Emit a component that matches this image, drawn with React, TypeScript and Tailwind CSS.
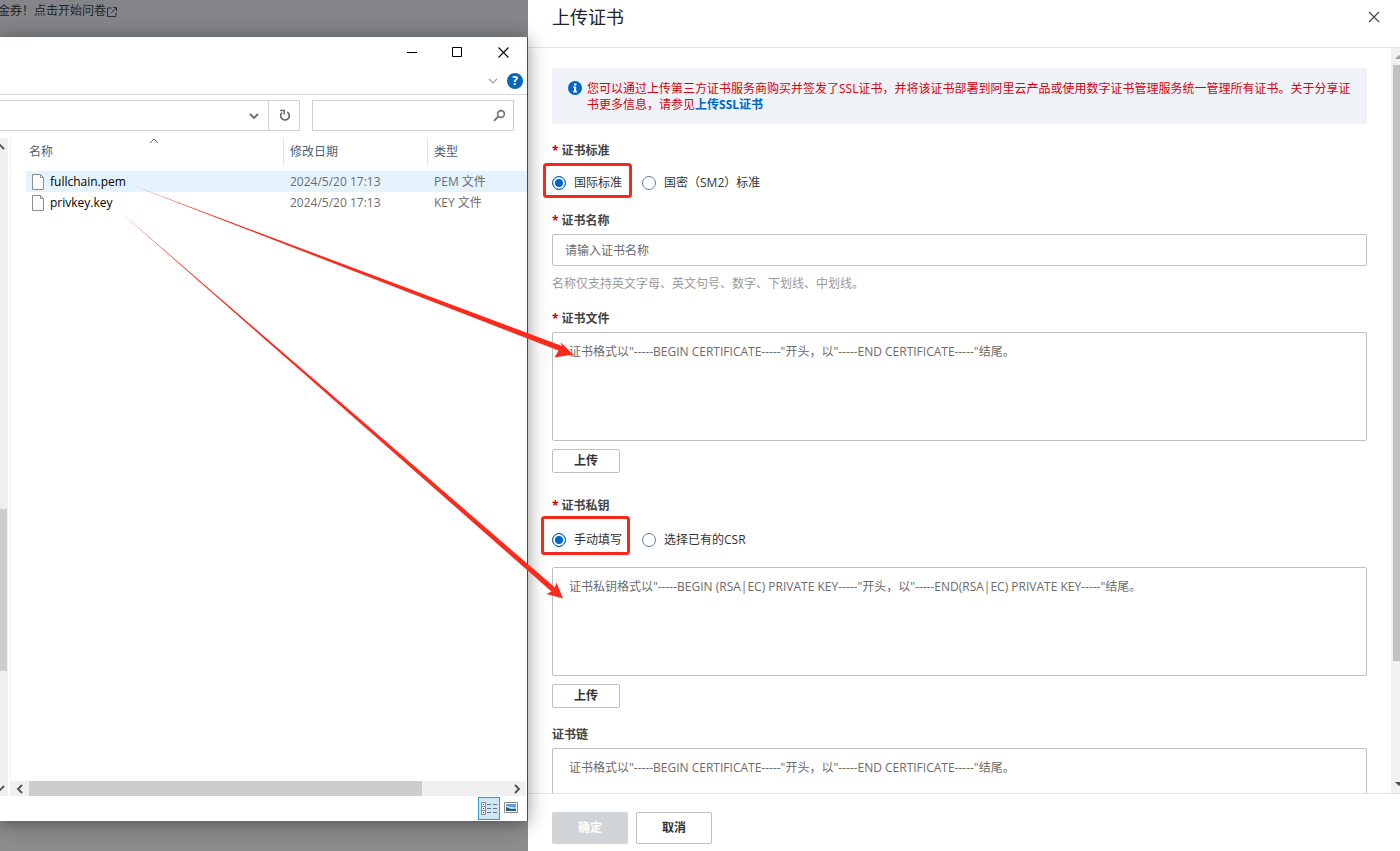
import { useState } from 'react'
import type { ReactNode } from 'react'

const files = [
  { name: 'fullchain.pem', date: '2024/5/20 17:13', type: 'PEM 文件' },
  { name: 'privkey.key', date: '2024/5/20 17:13', type: 'KEY 文件' },
]

const certPlaceholder = '证书格式以"-----BEGIN CERTIFICATE-----"开头，以"-----END CERTIFICATE-----"结尾。'
const keyPlaceholder = '证书私钥格式以"-----BEGIN (RSA|EC) PRIVATE KEY-----"开头，以"-----END(RSA|EC) PRIVATE KEY-----"结尾。'

function FileIcon() {
  return (
    <svg width="12" height="16" viewBox="0 0 12 16" className="shrink-0">
      <path d="M0.5 0.5h8l3 3v12h-11z" fill="#fafafa" stroke="#8f8f8f" />
      <path d="M8.5 0.5v3h3" fill="none" stroke="#8f8f8f" />
    </svg>
  )
}

function Chevron({ d, color = '#505050' }: { d: string; color?: string }) {
  return (
    <svg width="10" height="10" viewBox="0 0 10 10" className="shrink-0">
      <path d={d} fill="none" stroke={color} strokeWidth="1.8" />
    </svg>
  )
}

function Explorer() {
  const [selected, setSelected] = useState('fullchain.pem')

  return (
    <section className="relative z-10 mr-px flex min-h-0 flex-1 flex-col bg-white shadow-[0_2px_18px_rgba(0,0,0,0.45),1px_0_0_#5c5f63]">
      <div className="flex h-[30px] shrink-0 items-center justify-end pr-px">
        <button aria-label="最小化" className="flex h-full w-[46px] items-center justify-center">
          <svg width="11" height="11" viewBox="0 0 11 11"><path d="M1 5.5h10" stroke="#000" /></svg>
        </button>
        <button aria-label="最大化" className="flex h-full w-[46px] items-center justify-center">
          <svg width="11" height="11" viewBox="0 0 11 11"><path d="M0.5 0.5h9v9h-9z" fill="none" stroke="#000" /></svg>
        </button>
        <button aria-label="关闭" className="flex h-full w-[46px] items-center justify-center">
          <svg width="11" height="11" viewBox="0 0 11 11"><path d="M0.5 0.5l10 10M10.5 0.5l-10 10" stroke="#000" strokeWidth="1.1" /></svg>
        </button>
      </div>
      <div className="flex h-[28px] shrink-0 items-center justify-end gap-[9px] border-b border-[#d9d9d9] pr-1">
        <button aria-label="展开功能区" className="flex">
          <svg width="10" height="10" viewBox="0 0 10 10"><path d="M1 3l4 4l4-4" fill="none" stroke="#a0a0a0" strokeWidth="1.2" /></svg>
        </button>
        <button aria-label="帮助" className="flex size-4 items-center justify-center rounded-full bg-[#0a66b8] text-[12px] leading-4 font-bold text-white">?</button>
      </div>

      <div className="mt-[5px] mr-[13px] flex h-[31px] shrink-0 gap-3">
        <div className="flex w-[300px] border border-l-0 border-[#d0d0d0]">
          <button aria-label="以前的位置" className="flex flex-1 items-center justify-end pr-[9px]">
            <Chevron d="M1 3l4 4l4-4" color="#6a6a6a" />
          </button>
          <button aria-label="刷新" className="flex w-[31px] items-center justify-center border-l border-[#d0d0d0] pl-px">
            <svg width="12" height="13" viewBox="0 0 12 13">
              <path d="M8.2 3A4.3 4.3 0 1 1 3 3.6" fill="none" stroke="#6a6a6a" strokeWidth="1.7" />
              <path d="M1.2 1.6h4v4" fill="none" stroke="#6a6a6a" strokeWidth="1.5" />
            </svg>
          </button>
        </div>
        <div className="flex flex-1 items-center border border-[#d0d0d0] pr-[7px]">
          <input aria-label="搜索" className="h-full min-w-0 flex-1 px-2 text-[12px] outline-none" />
          <svg width="13" height="13" viewBox="0 0 13 13">
            <circle cx="8" cy="5" r="3.4" fill="none" stroke="#707070" strokeWidth="1.6" />
            <path d="M5.4 7.4L1 11.8" stroke="#707070" strokeWidth="1.8" />
          </svg>
        </div>
      </div>

      <div className="mt-[7px] flex min-h-0 flex-1">
        <div className="flex w-2 shrink-0 flex-col items-end overflow-hidden bg-[#f0f0f0] pr-[3px]">
          <div className="flex h-[17px] items-center"><Chevron d="M1 7l4-4l4 4" /></div>
          <div className="grow-[355]" />
          <div className="-mr-[2px] w-[7px] grow-[162] bg-[#cdcdcd]" />
          <div className="grow-[108]" />
          <div className="flex h-[17px] items-center"><Chevron d="M1 3l4 4l4-4" /></div>
        </div>
        <div className="ml-[2px] flex min-w-0 flex-1 flex-col border-l border-[#f0f0f0]">
          <div className="relative min-h-0 flex-1 pl-[15px]">
            <svg width="10" height="6" viewBox="0 0 10 6" className="absolute top-0 left-[138px]">
              <path d="M1 5l4-4l4 4" fill="none" stroke="#606060" />
            </svg>
            <table className="w-full table-fixed border-collapse text-left text-[12px] leading-[21px]">
              <colgroup>
                <col className="w-[258px]" />
                <col className="w-[144px]" />
                <col />
              </colgroup>
              <thead className="text-[#4c607a]">
                <tr>
                  <th className="p-0 pb-[6px] font-normal"><div className="h-[27px] border-r border-[#e5e5e5] pl-[3px] leading-[27px]">名称</div></th>
                  <th className="p-0 pb-[6px] font-normal"><div className="h-[27px] border-r border-[#e5e5e5] pl-[6px] leading-[27px]">修改日期</div></th>
                  <th className="p-0 pb-[6px] font-normal"><div className="h-[27px] pl-[6px] leading-[27px]">类型</div></th>
                </tr>
              </thead>
              <tbody>
                {files.map((file) => (
                  <tr
                    key={file.name}
                    onClick={() => setSelected(file.name)}
                    className={selected === file.name ? 'bg-[#e5f3ff]' : ''}
                  >
                    <td className="p-0 pl-[6px] text-black">
                      <div className="flex items-center gap-[6px]"><FileIcon />{file.name}</div>
                    </td>
                    <td className="p-0 pl-[6px] text-[#6d6d6d]">{file.date}</td>
                    <td className="p-0 pl-[6px] text-[#6d6d6d]">{file.type}</td>
                  </tr>
                ))}
              </tbody>
            </table>
          </div>
          <div className="mr-px flex h-[15px] shrink-0 items-stretch bg-[#f0f0f0]">
            <div className="flex w-[18px] items-center justify-center"><Chevron d="M7 1L3 5l4 4" /></div>
            <div className="grow-[394] bg-[#cdcdcd]" />
            <div className="grow-[86]" />
            <div className="flex w-[18px] items-center justify-center"><Chevron d="M3 1l4 4l-4 4" /></div>
          </div>
        </div>
      </div>

      <div className="flex h-[25px] shrink-0 items-start justify-end gap-1 pt-px pr-[9px]">
        <button aria-label="详细信息" className="flex h-[23px] w-[22px] items-center justify-center border border-[#2f9ccb] bg-[#cce8f6]">
          <svg width="17" height="14" viewBox="0 0 17 14">
            <path d="M0.5 0.5h4v4h-4zM0.5 4.5h4v4h-4zM0.5 8.5h4v4h-4z" fill="#fff" stroke="#8a8a8a" />
            <path d="M2 2h1v1h-1zM2 6h1v1h-1zM2 10h1v1h-1z" fill="#333" />
            <path d="M6 2.5h4M12 2.5h4M6 6.5h4M12 6.5h4M6 10.5h4M12 10.5h4" stroke="#6b7883" />
          </svg>
        </button>
        <button aria-label="大图标" className="flex h-[21px] items-center">
          <svg width="14" height="11" viewBox="0 0 14 11">
            <path d="M0.5 0.5h13v10h-13z" fill="#fff" stroke="#8a8a8a" />
            <path d="M2 2h10v7h-10z" fill="#5f9fe0" />
            <path d="M2 4l4 1l6 0.5v1l-10 0.5z" fill="#d9ecf7" />
            <path d="M2 5l5 2h5v2h-10z" fill="#2f5d6c" />
          </svg>
        </button>
      </div>
    </section>
  )
}

function Label({ htmlFor, required = true, children }: { htmlFor: string; required?: boolean; children: ReactNode }) {
  return (
    <label htmlFor={htmlFor} className="block h-4 font-bold text-[#444]">
      {required && <span className="mr-[3px] text-[#c80000]">*</span>}
      {children}
    </label>
  )
}

type RadioProps = {
  name: string
  value: string
  options: string[]
  onChange: (value: string) => void
}

function RadioGroup({ name, value, options, onChange }: RadioProps) {
  return (
    <div className="flex gap-5">
      {options.map((option, i) => (
        <label key={option} className="flex items-center gap-2">
          <input
            id={`${name}-${i}`}
            type="radio"
            name={name}
            checked={value === option}
            onChange={() => onChange(option)}
            className="size-[14px] appearance-none rounded-full border border-[#5b7fa6] bg-white checked:border-[#0064c8] checked:bg-[#0064c8] checked:shadow-[inset_0_0_0_2px_#fff]"
          />
          {option}
        </label>
      ))}
    </div>
  )
}

function CertTextarea({ id, placeholder }: { id: string; placeholder: string }) {
  return (
    <textarea
      id={id}
      placeholder={placeholder}
      className="block h-[109px] w-full resize-none rounded-[2px] border border-[#c0c0c0] bg-white px-4 py-[10px] leading-[18px] outline-none placeholder:text-[#6b6b6b]"
    />
  )
}

function UploadButton() {
  return (
    <button className="mt-2 block h-6 w-[68px] rounded-[2px] border border-[#c0c0c0] bg-white font-bold text-[#333]">上传</button>
  )
}

function Drawer() {
  const [standard, setStandard] = useState('国际标准')
  const [source, setSource] = useState('手动填写')

  return (
    <main className="flex min-w-0 flex-1 flex-col bg-white">
      <header className="flex h-12 shrink-0 items-start justify-between border-b border-[#e3e4e6] pt-[5px] pr-5 pl-6">
        <h1 className="text-[18px] leading-6 text-[#222]">上传证书</h1>
        <button aria-label="关闭" className="mt-[6px]">
          <svg width="12" height="12" viewBox="0 0 12 12"><path d="M1 1l10 10M11 1L1 11" stroke="#444" strokeWidth="1.1" /></svg>
        </button>
      </header>

      <div className="flex min-h-0 flex-1">
        <form className="min-w-0 flex-1 overflow-hidden px-6 pt-5">
          <div className="flex gap-[5px] bg-[#eff3f8] pt-[13px] pr-[15px] pb-[11px] pl-4">
            <svg width="14" height="14" viewBox="0 0 14 14" className="shrink-0">
              <circle cx="7" cy="7" r="7" fill="#0064c8" />
              <path d="M6 2.4h2.4v2H6zM5.2 5.6H8.2v4.6h1v1.2H5v-1.2h1V6.8h-.8z" fill="#fff" />
            </svg>
            <p className="text-[#d8000c]">
              您可以通过上传第三方证书服务商购买并签发了SSL证书，并将该证书部署到阿里云产品或使用数字证书管理服务统一管理所有证书。关于分享证书更多信息，请参见<a href="#upload-ssl" className="font-bold text-[#0064c8]">上传SSL证书</a>
            </p>
          </div>

          <div className="mt-[19px]">
            <Label htmlFor="standard-0">证书标准</Label>
            <div className="mt-4">
              <RadioGroup name="standard" value={standard} options={['国际标准', '国密（SM2）标准']} onChange={setStandard} />
            </div>
          </div>

          <div className="mt-[22px]">
            <Label htmlFor="cert-name">证书名称</Label>
            <input
              id="cert-name"
              type="text"
              placeholder="请输入证书名称"
              className="mt-[5px] block h-8 w-full rounded-[2px] border border-[#c0c0c0] px-3 outline-none placeholder:text-[#6b6b6b]"
            />
            <p className="mt-[10px] text-[#999]">名称仅支持英文字母、英文句号、数字、下划线、中划线。</p>
          </div>

          <div className="mt-[19px]">
            <Label htmlFor="cert-file">证书文件</Label>
            <div className="mt-[5px]"><CertTextarea id="cert-file" placeholder={certPlaceholder} /></div>
            <UploadButton />
          </div>

          <div className="mt-[25px]">
            <Label htmlFor="source-0">证书私钥</Label>
            <div className="mt-[18px]">
              <RadioGroup name="source" value={source} options={['手动填写', '选择已有的CSR']} onChange={setSource} />
            </div>
            <div className="mt-[19px]"><CertTextarea id="cert-key" placeholder={keyPlaceholder} /></div>
            <UploadButton />
          </div>

          <div className="mt-[19px]">
            <Label htmlFor="cert-chain" required={false}>证书链</Label>
            <div className="mt-[5px]"><CertTextarea id="cert-chain" placeholder={certPlaceholder} /></div>
          </div>
        </form>

        <div className="flex w-[9px] shrink-0 flex-col overflow-hidden bg-[#f1f1f1] pl-[2px]">
          <svg width="12" height="17" viewBox="0 0 12 17" className="ml-[2px] shrink-0"><path d="M0 11l4-4l4 4z" fill="#a3a3a3" /></svg>
          <div className="h-4/5 bg-[#c1c1c1]" />
          <div className="flex-1" />
          <svg width="12" height="17" viewBox="0 0 12 17" className="ml-[2px] shrink-0"><path d="M0 6h8l-4 4z" fill="#505050" /></svg>
        </div>
      </div>

      <footer className="flex h-[58px] shrink-0 items-start gap-2 border-t border-[#e3e4e6] px-6 pt-[18px]">
        <button disabled className="h-8 w-[76px] rounded-[2px] bg-[#d1d5d8] font-bold text-white">确定</button>
        <button className="h-8 w-[76px] rounded-[2px] border border-[#c0c0c0] bg-white font-bold text-[#333]">取消</button>
      </footer>
    </main>
  )
}

// hand-drawn marks that sit on top of both windows
function Annotations() {
  return (
    <svg width="660" height="620" viewBox="0 0 660 620" className="pointer-events-none absolute top-0 left-0 z-20">
      <g fill="#fa2a1c">
        <path d="M132 185L562 346L560.5 342L573 354.5L554.5 357.5L558.5 350.5Z" />
        <path d="M118 210L555 587.5L556.5 582.5L563 598.5L546.5 594L551.5 591.5Z" />
      </g>
      <g fill="none" stroke="#f5281c" strokeWidth="3">
        <rect x="544.5" y="164.5" width="86" height="32" rx="2" />
        <rect x="542.5" y="517.5" width="86" height="36" rx="2" />
      </g>
    </svg>
  )
}

export default function App() {
  return (
    <div className="relative flex h-screen overflow-hidden bg-[#858689] font-['Open_Sans','Noto_Sans_CJK_SC',sans-serif] text-[12px] leading-4 text-[#333]">
      <div className="flex w-[528px] shrink-0 flex-col bg-linear-to-b from-[#848588] to-[#8c8c8c] pb-[30px]">
        <div className="flex h-[37px] shrink-0 items-start gap-px pt-[3px] text-[#222]">
          <p className="-ml-[2px]">金券！点击开始问卷</p>
          <svg width="10" height="10" viewBox="0 0 10 10" className="mt-[4px]">
            <path d="M4.5 1H0.5v8.5h8.5V5.5M6 0.5h3.5V4M9.5 0.5L4.5 5.5" fill="none" stroke="#222" strokeWidth="0.9" />
          </svg>
        </div>
        <Explorer />
      </div>
      <Drawer />
      <Annotations />
    </div>
  )
}
